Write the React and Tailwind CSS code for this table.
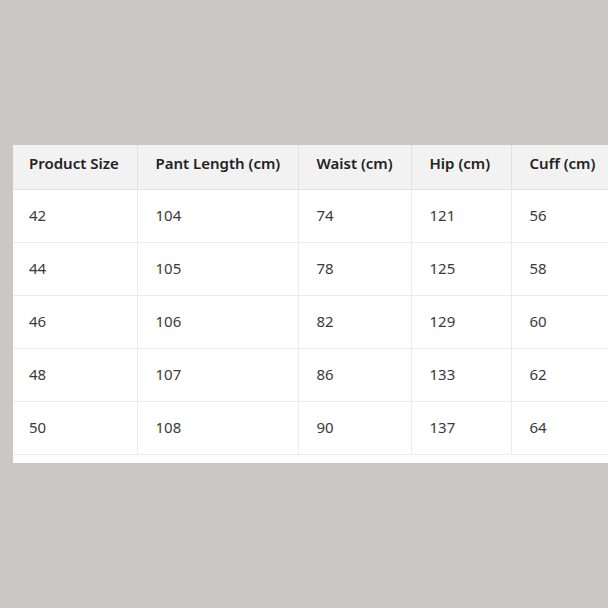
export default function App() {
  const headers = ['Product Size', 'Pant Length (cm)', 'Waist (cm)', 'Hip (cm)', 'Cuff (cm)'];
  const widths = ['w-[124px]', 'w-[161px]', 'w-[113px]', 'w-[100px]', 'w-[120px]'];
  const rows = [
    ['42', '104', '74', '121', '56'],
    ['44', '105', '78', '125', '58'],
    ['46', '106', '82', '129', '60'],
    ['48', '107', '86', '133', '62'],
    ['50', '108', '90', '137', '64'],
  ];

  return (
    <div className="w-[608px] h-[608px] overflow-hidden bg-[#cbc7c4] pt-[145px] pl-[13px] font-['Noto_Sans',sans-serif]">
      <div className="w-[620px] bg-white pb-2">
        <table className="border-collapse table-fixed text-[15px]">
          <thead>
            <tr className="bg-[#f3f2f2] h-[44px]">
              {headers.map((h, i) => (
                <th
                  key={h}
                  className={`${widths[i]} pb-2 text-left font-semibold text-[#222] border-b border-[#e3e1e0] ${i > 0 ? 'border-l pl-[18px] pr-4' : 'px-4'}`}
                >
                  {h}
                </th>
              ))}
            </tr>
          </thead>
          <tbody>
            {rows.map((r) => (
              <tr key={r[0]} className="h-[53px]">
                {r.map((c, i) => (
                  <td
                    key={i}
                    className={`text-[#3a3a3a] border-b border-[#eceaea] ${i > 0 ? 'border-l pl-[18px] pr-4' : 'px-4'}`}
                  >
                    {c}
                  </td>
                ))}
              </tr>
            ))}
          </tbody>
        </table>
      </div>
    </div>
  );
}
